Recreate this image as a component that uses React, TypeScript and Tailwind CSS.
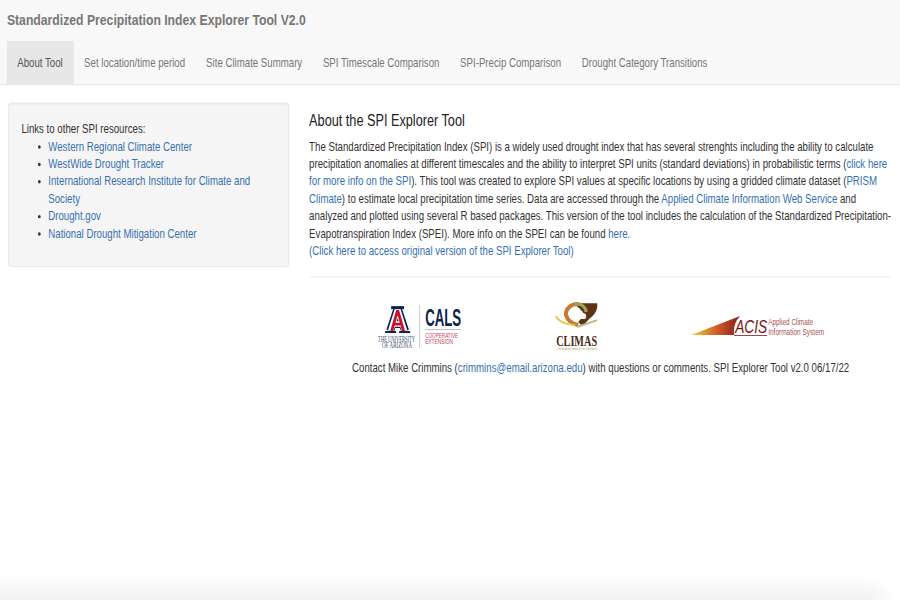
export default function App() {
  const tabs = ["About Tool", "Set location/time period", "Site Climate Summary", "SPI Timescale Comparison", "SPI-Precip Comparison", "Drought Category Transitions"];
  const link = "text-[#3571b0]";
  const resources = ["Western Regional Climate Center", "WestWide Drought Tracker", "International Research Institute for Climate and Society", "Drought.gov", "National Drought Mitigation Center"];
  return (
    <div className="relative h-[600px] w-[900px] overflow-hidden bg-white">
      <div className="h-[690px] w-[1304px] origin-top-left scale-x-[.69] scale-y-[.87] text-[14px] leading-[20px] text-[#333] font-['Liberation_Sans',Arial,sans-serif]">
        <nav className="h-[98px] border-b border-[#e7e7e7] bg-[#f8f8f8] px-[10px]">
          <div className="flex h-[47px] items-center pb-[2px] text-[17.7px] font-bold text-[#777]">Standardized Precipitation Index Explorer Tool V2.0</div>
          <ul className="flex h-[50px]">
            {tabs.map((t, i) => (
              <li key={t} className={`flex items-center pl-[15px] ${i === 0 ? "bg-[#e7e7e7] pr-[16px] text-[#555]" : i === 1 ? "pr-[15.5px] text-[#777]" : "pr-[15px] text-[#777]"}`}>{t}</li>
            ))}
          </ul>
        </nav>
        <main className="flex gap-[29px] pl-[12px] pt-[20px]">
          <aside className="h-[189px] w-[407px] shrink-0 rounded border border-[#e3e3e3] bg-[#f5f5f5] pl-[18px] pr-[19px] pt-[18.5px] shadow-[inset_0_1px_1px_rgba(0,0,0,0.05)]">
            <p>Links to other SPI resources:</p>
            <ul className="list-disc pl-[39px]">
              {resources.map((r) => (<li key={r} className={link + " marker:text-[#333]"}>{r}</li>))}
            </ul>
          </aside>
          <section className="w-[845px] shrink-0">
            <h4 className="mb-[9px] mt-[10.5px] text-[18.4px] leading-[20px] text-[#222]">About the SPI Explorer Tool</h4>
            <p>
              The Standardized Precipitation Index (SPI) is a widely used drought index that has several strenghts including the ability to calculate precipitation anomalies at different timescales and the ability to interpret SPI units (standard deviations) in probabilistic terms (<span className={link}>click here for more info on the SPI</span>). This tool was created to explore SPI values at specific locations by using a gridded climate dataset (<span className={link}>PRISM Climate</span>) to estimate local precipitation time series. Data are accessed through the <span className={link}>Applied Climate Information Web Service</span> and analyzed and plotted using several R based packages. This version of the tool includes the calculation of the Standardized Precipitation-Evapotranspiration Index (SPEI). More info on the SPEI can be found <span className={link}>here.</span>
              <br />
              <span className={link}>(Click here to access original version of the SPI Explorer Tool)</span>
            </p>
            <hr className="mt-[20px] border-[#eee]" />
            <svg width="845" height="63" viewBox="309 300 583 55" preserveAspectRatio="none" className="mt-[26px] block">
              {/* University of Arizona / CALS */}
              <g fill="none" strokeLinejoin="miter">
                <path d="M397.5 308L390 331M397.5 308L405 331M392 324H403" stroke="#0c234b" strokeWidth="8" />
                <path d="M397.5 309L390.5 331M397.5 309L404.5 331M393 324H402" stroke="#fff" strokeWidth="5.5" />
                <path d="M397.5 310L391.5 331M397.5 310L403.5 331M394 324H401" stroke="#c8102e" strokeWidth="2.8" />
              </g>
              <rect x="391" y="306" width="13" height="3" fill="#0c234b" />
              <rect x="385" y="331" width="11" height="2" fill="#0c234b" />
              <rect x="399" y="331" width="11" height="2" fill="#0c234b" />
              <text x="378" y="341.5" fontSize="8" fill="#3a4a6b" fontFamily="'Liberation Serif',serif" textLength="37" lengthAdjust="spacingAndGlyphs">THE UNIVERSITY</text>
              <text x="382" y="348" fontSize="8" fill="#3a4a6b" fontFamily="'Liberation Serif',serif" textLength="30" lengthAdjust="spacingAndGlyphs">OF ARIZONA</text>
              <rect x="419" y="305" width="1" height="43" fill="#c9ced8" />
              <text x="425" y="326" fontSize="24" fontWeight="700" fill="#0c234b" textLength="36" lengthAdjust="spacingAndGlyphs">CALS</text>
              <rect x="425" y="329" width="36" height="1" fill="#b9bfd0" />
              <text x="425" y="338" fontSize="7" fill="#c8405a" textLength="33" lengthAdjust="spacingAndGlyphs">COOPERATIVE</text>
              <text x="425" y="344" fontSize="7" fill="#c8405a" textLength="28" lengthAdjust="spacingAndGlyphs">EXTENSION</text>
              {/* CLIMAS */}
              <path d="M573 303H597C598 310 594 315 590 318C587 321 585 324 582 326L578 322C583 318 583 312 579 308C577 306 575 305 573 303Z" fill="#5e3314" />
              <path d="M579 304C571 303 565 309 566 315C567 320 572 324 578 325" fill="none" stroke="#c8792e" strokeWidth="4" />
              <path d="M574 304C580 302 586 307 586 312" fill="none" stroke="#9aa35c" strokeWidth="3" />
              <path d="M556 316C558 321 566 325 575 325" fill="none" stroke="#e5c84e" strokeWidth="2" />
              <path d="M573 319C570 316 572 312 575 313C576 309 582 309 583 313C586 313 587 317 585 319Z" fill="#fff" />
              <path d="M577 327L597 320" fill="none" stroke="#b9bb8a" strokeWidth="2" />
              <text x="556" y="346" fontSize="14" fontWeight="700" fill="#4a2a12" fontFamily="'Liberation Serif',serif" textLength="41" lengthAdjust="spacingAndGlyphs">CLIMAS</text>
              <text x="557" y="350" fontSize="3" fill="#a7a35a" textLength="40" lengthAdjust="spacingAndGlyphs">Climate Assessment for the Southwest</text>
              {/* ACIS */}
              <defs>
                <linearGradient id="acis" x1="0" x2="1" y1="0" y2="0">
                  <stop offset="0" stopColor="#f4d23c" />
                  <stop offset="0.5" stopColor="#d2612a" />
                  <stop offset="1" stopColor="#8b1a1a" />
                </linearGradient>
              </defs>
              <path d="M691 335L740 316C735 321 733 328 734 335Z" fill="url(#acis)" />
              <rect x="734" y="335" width="33" height="0.8" fill="#8b1a1a" />
              <text x="735" y="333" fontSize="19" fontStyle="italic" fill="#7a1414" textLength="32" lengthAdjust="spacingAndGlyphs">ACIS</text>
              <text x="768" y="325" fontSize="9" fill="#a85050" textLength="45" lengthAdjust="spacingAndGlyphs">Applied Climate</text>
              <text x="768" y="335" fontSize="9" fill="#a85050" textLength="56" lengthAdjust="spacingAndGlyphs">Information System</text>
            </svg>
            <p className="mt-[5px] text-center">
              Contact Mike Crimmins (<span className={link}>crimmins@email.arizona.edu</span>) with questions or comments. SPI Explorer Tool v2.0 06/17/22
            </p>
          </section>
        </main>
      </div>
      <div className="absolute bottom-0 left-[-30px] right-[25px] h-0 shadow-[0_0_22px_6px_rgba(0,0,0,0.13)]" />
    </div>
  );
}
